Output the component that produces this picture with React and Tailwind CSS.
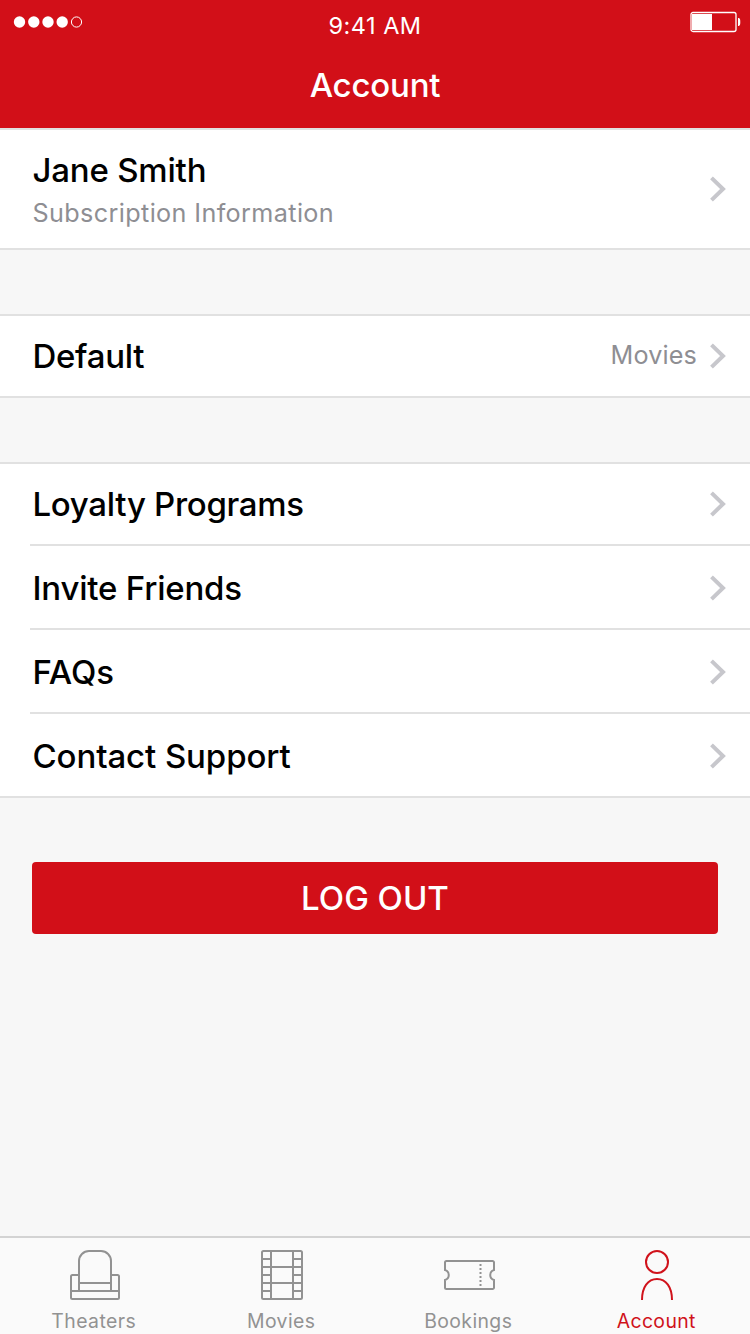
const Chevron = () => (
  <svg className="h-[26px] w-[17px] shrink-0" viewBox="0 0 17 26" fill="none" stroke="#c7c7cc" strokeWidth="4">
    <path d="M1.500 1.900 L13 13 L1.500 24.100" />
  </svg>
);

const Seat = () => (
  <svg className="size-[50px]" viewBox="0 0 50 50" fill="none" stroke="currentColor" strokeWidth="2">
    <path d="M9 41V11a10 10 0 0 1 10-10h12a10 10 0 0 1 10 10v30M9 33h32M1 41h48" />
    <path d="M9 25H2.5A1.5 1.5 0 0 0 1 26.500V47.500A1.500 1.500 0 0 0 2.500 49h45a1.500 1.500 0 0 0 1.500-1.500v-21A1.500 1.500 0 0 0 47.500 25H41" />
  </svg>
);

const Film = () => (
  <svg className="h-[50px] w-[42px]" viewBox="0 0 42 50" fill="none" stroke="currentColor" strokeWidth="2">
    <rect x="1" y="1" width="40" height="48" rx="1.5" />
    <path d="M10 1v48M32 1v48M1 17h40M1 33h40M1 9h9M1 25h9M1 41h9M32 9h9M32 25h9M32 41h9" />
  </svg>
);

const Ticket = () => (
  <svg className="h-[50px] w-[51px]" viewBox="0 0 51 50" fill="none" stroke="currentColor" strokeWidth="2">
    <path d="M2.500 11h46a1.500 1.500 0 0 1 1.500 1.500V20a5.200 5.200 0 0 0 0 10v7.500a1.500 1.500 0 0 1-1.500 1.500h-46A1.500 1.500 0 0 1 1 37.500V30a5.200 5.200 0 0 0 0-10v-7.500A1.500 1.500 0 0 1 2.500 11z" />
    <path d="M36.500 14v23" strokeDasharray="2 2" />
  </svg>
);

const Person = () => (
  <svg className="h-[50px] w-[32px]" viewBox="0 0 32 50" fill="none" stroke="currentColor" strokeWidth="2">
    <circle cx="16" cy="12" r="11" />
    <path d="M1 50C1 37 7 29 16 29s15 8 15 21" />
  </svg>
);

const links = [
  { label: "Loyalty Programs", spacing: "tracking-[-0.3px]" },
  { label: "Invite Friends", spacing: "tracking-[-0.2px]" },
  { label: "FAQs", spacing: "tracking-[-0.1px]" },
  { label: "Contact Support", spacing: "tracking-[-0.1px]" },
];

const tabs = [
  { label: "Theaters", Icon: Seat, color: "text-[#929292]", nudge: "mr-[2px]", spacing: "tracking-[0.45px]" },
  { label: "Movies", Icon: Film, color: "text-[#929292]", nudge: "mr-[2px]", spacing: "tracking-[0.45px]" },
  { label: "Bookings", Icon: Ticket, color: "text-[#929292]", nudge: "mr-[3px]", spacing: "tracking-[0.4px]" },
  { label: "Account", Icon: Person, color: "text-[#d0121b]", nudge: "mr-[2px]", spacing: "tracking-[0.4px]" },
];

export default function App() {
  return (
    <div className="flex h-[1334px] w-[750px] flex-col overflow-hidden bg-[#f7f7f7] font-['Inter',sans-serif] text-[33px] leading-[40px] text-black">
      <header className="h-[130px] shrink-0 border-b-2 border-[#e1e1e1] bg-[#d20f18] text-white">
        <div className="grid h-[50px] grid-cols-3 items-start">
          <svg className="mt-[15px] ml-[13px] h-[14px] w-[70px]" viewBox="0 0 70 14" fill="#fff">
            <circle cx="6.500" cy="7" r="5.700" />
            <circle cx="20.800" cy="7" r="5.700" />
            <circle cx="35" cy="7" r="5.700" />
            <circle cx="49.200" cy="7" r="5.700" />
            <circle cx="63.500" cy="7" r="5.100" fill="none" stroke="#fff" />
          </svg>
          <span className="mt-[10px] text-center text-[23.500px] leading-[32px] tracking-[0.5px]">9:41 AM</span>
          <svg className="mt-[11px] mr-[9px] h-[22px] w-[51px] justify-self-end" viewBox="0 0 51 22" fill="none">
            <rect x="1" y="1.500" width="45" height="19" rx="2" stroke="#fff" strokeWidth="1.3" />
            <path d="M2 3h20v16H2zM48 7c2.300 0 2.300 2 2.300 4s0 4-2.300 4z" fill="#fff" />
          </svg>
        </div>
        <h1 className="mt-[15px] text-center font-medium tracking-[-0.2px]">Account</h1>
      </header>

      <section className="flex h-[120px] shrink-0 items-center justify-between border-b-2 border-[#e1e1e1] bg-white pr-[23px] pl-[32.500px]">
        <div className="flex flex-col pt-[2px]">
          <span className="font-medium tracking-[-0.2px]">Jane Smith</span>
          <span className="mt-[5px] text-[25.200px] leading-[36px] tracking-[0.370px] text-[#8e8e93]">Subscription Information</span>
        </div>
        <Chevron />
      </section>

      <section className="mt-[64px] flex h-[84px] shrink-0 items-center justify-between border-y-2 border-[#e1e1e1] bg-white pr-[23px] pl-[32.500px]">
        <span className="font-medium tracking-[-0.3px]">Default</span>
        <div className="flex items-center gap-[13px]">
          <span className="pb-[2px] text-[25.200px] tracking-[0.150px] text-[#8e8e93]">Movies</span>
          <Chevron />
        </div>
      </section>

      <ul className="mt-[64px] shrink-0 border-y-2 border-[#e1e1e1] bg-white pl-[30px]">
        {links.map(({ label, spacing }, i) => (
          <li
            key={label}
            className={`flex items-center justify-between pr-[23px] pl-[2.500px] ${i > 0 ? "h-[84px] border-t-2 border-[#e1e1e1] pt-[2px]" : "h-[80px]"}`}
          >
            <span className={`font-medium ${spacing}`}>{label}</span>
            <Chevron />
          </li>
        ))}
      </ul>

      <button className="mt-[64px] mr-[32px] ml-[32px] h-[72px] shrink-0 rounded-[4px] bg-[#d20f18] text-center font-medium text-white">
        LOG OUT
      </button>

      <nav className="mt-auto grid h-[98px] shrink-0 grid-cols-4 border-t-2 border-[#d3d3d3] bg-[#fafafa]">
        {tabs.map(({ label, Icon, color, nudge, spacing }) => (
          <div key={label} className={`flex flex-col items-center pt-[12px] pl-[2px] ${color}`}>
            <Icon />
            <span className={`mt-[9px] text-[19.400px] leading-[24px] ${nudge} ${spacing}`}>{label}</span>
          </div>
        ))}
      </nav>
    </div>
  );
}
